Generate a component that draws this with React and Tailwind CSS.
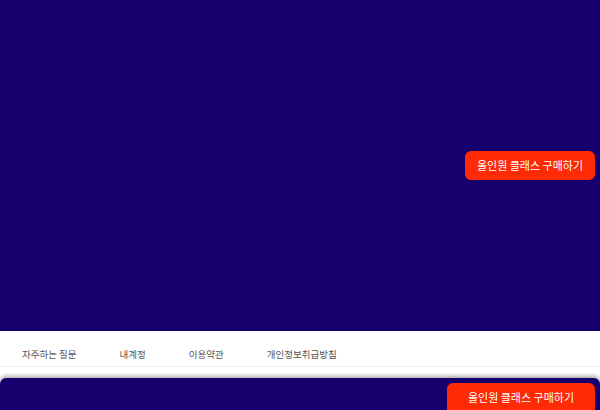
import React from 'react';

const links = ['자주하는 질문', '내계정', '이용약관', '개인정보취급방침'];

export default function App() {
  return (
    <div className="relative h-[410px] w-[600px] overflow-hidden bg-white font-['Noto_Sans_CJK_KR',sans-serif]">
      {/* Hero */}
      <section className="flex h-[331px] items-start justify-end bg-[#16006e] pr-[5px] pt-[151px]">
        <button className="h-[29px] w-[130px] rounded-[6px] bg-[#ff2a06] text-[11px] text-white">
          올인원 클래스 구매하기
        </button>
      </section>

      {/* Footer */}
      <footer className="h-[47px] bg-white">
        <nav className="flex h-[36px] items-center gap-[43px] border-b border-[#eeeeee] pl-[22px] pt-[11px]">
          {links.map(l => (
            <a key={l} className="text-[9.5px] text-[#555]">{l}</a>
          ))}
        </nav>
      </footer>

      {/* Sticky purchase bar */}
      <div className="absolute bottom-0 left-0 right-0 flex h-[32px] justify-end rounded-t-[6px] bg-[#16006e] pr-[5px] pt-[5px] shadow-[0_-2px_4px_rgba(0,0,0,0.35)]">
        <button className="h-[32px] w-[148px] rounded-[6px] bg-[#ff2a06] pb-[3px] text-[11px] text-white">
          올인원 클래스 구매하기
        </button>
      </div>
    </div>
  );
}
